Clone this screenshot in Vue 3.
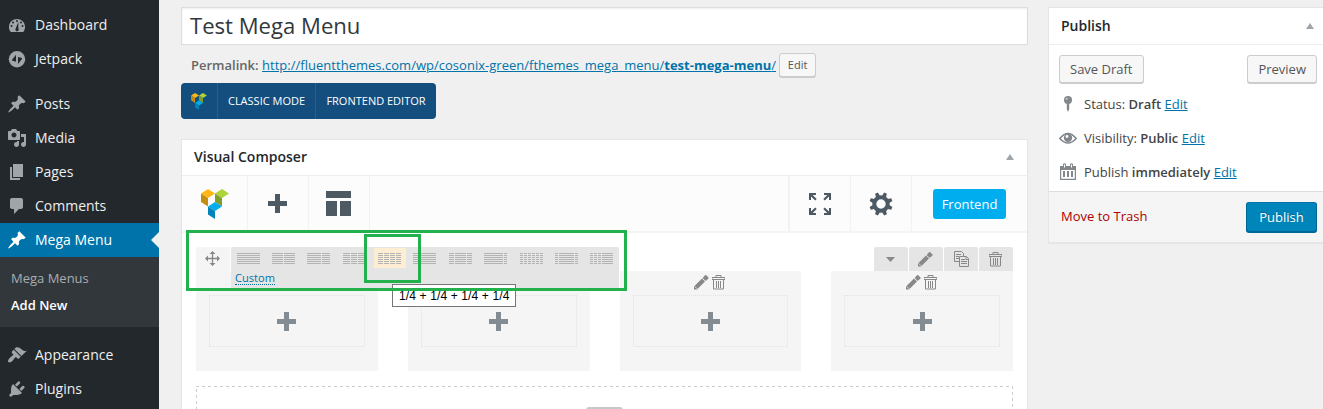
<script setup>
const icons = {
  dashboard: 'M3.76 17h12.48c1.34-1.59 2-3.72 1.76-5.82C17.54 7.08 14.25 4 10 4S2.46 7.08 2 11.18C1.76 13.28 2.42 15.41 3.76 17z',
  jetpack: 'M10 2a8.2 8.2 0 1 0 0 16.400a8.2 8.2 0 0 0 0-16.400z',
  pin: 'M10.44 3.02l1.82-1.82 6.36 6.35-1.83 1.82c-1.05-.68-2.48-.57-3.41.36l-.75.75c-.92.93-1.04 2.35-.35 3.41l-1.83 1.82-2.41-2.41-2.8 2.79c-.42.42-3.38 2.71-3.8 2.29s1.86-3.39 2.28-3.81l2.79-2.79L4.1 9.36l1.83-1.82c1.05.69 2.48.57 3.4-.36l.75-.75c.93-.92 1.05-2.35.36-3.41z',
  media: 'M13 11V4c0-.55-.45-1-1-1h-1.67L9 1H5L3.67 3H2c-.55 0-1 .45-1 1v7c0 .55.45 1 1 1h10c.55 0 1-.45 1-1zM7 4.500c1.380 0 2.500 1.120 2.500 2.500S8.380 9.500 7 9.500 4.500 8.380 4.500 7 5.620 4.500 7 4.500zM14 6h5v10.500c0 1.380-1.120 2.500-2.500 2.500S14 17.880 14 16.500s1.120-2.500 2.500-2.500c.17 0 .34.02.5.05V9h-3V6zm-4 8.050V13h2v3.500c0 1.380-1.120 2.500-2.500 2.500S7 17.880 7 16.500 8.120 14 9.500 14c.17 0 .34.02.5.05z',
  pages: 'M6 15V2h10v13H6zm-1 1h8v2H3V5h2v11z',
  comments: 'M5 2h9c1.100 0 2 .9 2 2v7c0 1.100-.9 2-2 2h-2l-5 5v-5H5c-1.100 0-2-.9-2-2V4c0-1.100.9-2 2-2z',
  brush: 'M14.480 11.060L7.410 3.990l1.500-1.500c.5-.56 2.300-.47 3.510.32 1.210.8 1.430 1.280 2.910 2.100 1.180.64 2.450 1.260 4.450.85zm-.71.71L6.700 4.700 4.930 6.470c-.39.39-.39 1.020 0 1.410l1.060 1.060c.39.39.39 1.030 0 1.420-.6.6-1.430 1.110-2.210 1.690-.35.26-.7.53-1.010.84C1.430 14.230.4 16.080 1.400 17.070c.99 1 2.840-.03 4.180-1.360.31-.31.58-.66.85-1.020.57-.78 1.080-1.610 1.690-2.210.39-.39 1.020-.39 1.410 0l1.060 1.060c.39.39 1.020.39 1.410 0z',
  plug: 'M13.110 4.360L9.870 7.600 8 5.730l3.240-3.240c.35-.34 1.050-.2 1.560.32.52.51.66 1.210.31 1.550zm-8 1.770l.91-1.120 9.010 9.010-1.190.84c-.71.71-2.630 1.160-3.820 1.160H6.140L4.900 17.260c-.59.59-1.540.59-2.120 0-.59-.58-.59-1.530 0-2.120l1.240-1.240v-3.880c0-1.130.4-3.190 1.090-3.890zm7.260 3.970l3.240-3.240c.34-.35 1.040-.21 1.550.31.52.51.66 1.210.31 1.550l-3.240 3.250z',
}
const menu = [
  { label: 'Dashboard', icon: 'dashboard' },
  { label: 'Jetpack', icon: 'jetpack' },
  { label: 'Posts', icon: 'pin', gap: true },
  { label: 'Media', icon: 'media' },
  { label: 'Pages', icon: 'pages' },
  { label: 'Comments', icon: 'comments' },
  { label: 'Mega Menu', icon: 'pin', current: true, sub: ['Mega Menus', 'Add New'] },
  { label: 'Appearance', icon: 'brush', gap: true },
  { label: 'Plugins', icon: 'plug' },
]
// Each layout is a list of [start, width] segments on a 23px wide glyph.
const layouts = [
  [[0, 23]],
  [[0, 11], [12, 11]],
  [[0, 14], [15, 8]],
  [[0, 7], [8, 6], [15, 8]],
  [[0, 5], [6, 5], [12, 5], [18, 5]],
  [[0, 5], [6, 17]],
  [[0, 5], [6, 11], [18, 5]],
  [[0, 19], [20, 3]],
  [[0, 3], [4, 3], [8, 3], [12, 3], [16, 3], [20, 3]],
  [[0, 3], [4, 15], [20, 3]],
  [[0, 3], [4, 3], [8, 3], [12, 11]],
]
const lines = [0, 2, 4, 6, 8, 10]
const teeth = [22.5, 67.5, 112.5, 157.5, 202.5, 247.5, 292.5, 337.5]
</script>

<template>
  <div class="screen">
    <svg class="defs" width="0" height="0">
      <symbol id="vc" viewBox="0 0 28 30">
        <path fill="#ffb718" d="M0 4.500L7 0l7 4.500L7 9z" />
        <path fill="#c58e12" d="M0 4.500L7 9v8.500L0 13z" />
        <path fill="#add43b" d="M14 4.500L21 0l7 4.500L21 9z" />
        <path fill="#7f9f2c" d="M14 4.500L21 9v8.500l-7-4.500z" />
        <path fill="#00aeef" d="M7 17.500L14 13l7 4.500L14 22z" />
        <path fill="#0084bb" d="M7 17.500L14 22v8l-7-4.500z" />
      </symbol>
      <symbol id="pencil" viewBox="0 0 15 15">
        <path d="M0 14.500V11.500L8 3.500l3 3-8 8z" />
        <path d="M8.600 2.900L11.300 0H12L14.500 2.500V3.500L11.600 5.900z" />
        <path d="M.8 11.500l2.400 2.400" stroke="#eee" stroke-width=".8" />
      </symbol>
      <symbol id="trash" viewBox="0 0 13 15">
        <path d="M4 2.500V.5h5v2M0 3.500V2.500h13v2H0zM1.500 4.500v9.500h10V4.500M4.500 6v7M6.500 6v7M8.500 6v7" fill="none" stroke="currentColor" />
      </symbol>
    </svg>

    <nav class="sidebar">
      <template v-for="m in menu" :key="m.label">
        <div class="item" :class="{ gap: m.gap, current: m.current }">
          <svg width="20" height="20" viewBox="0 0 20 20">
            <path :d="icons[m.icon]" fill="currentColor" fill-rule="evenodd" />
            <g v-if="m.icon === 'dashboard'" fill="#23282d">
              <circle cx="10" cy="6" r="1" /><circle cx="6" cy="7.500" r="1" />
              <circle cx="14" cy="7.500" r="1" /><circle cx="4.500" cy="11" r="1" />
              <circle cx="15.500" cy="11" r="1" />
              <path d="M11.300 7l.1 6.500a1.700 1.700 0 1 1-2.700 0z" />
            </g>
            <path v-if="m.icon === 'jetpack'" fill="#23282d" d="M9 5.800v6.900l-3.200-.9c-.8-.2-1-.7-.6-1.400zM11 8l3.200.8c.8.2 1 .8.6 1.500L11 15z" />
          </svg>
          <span>{{ m.label }}</span>
        </div>
        <div v-if="m.sub" class="submenu">
          <span v-for="(s, i) in m.sub" :key="s" :class="{ on: i === 1 }">{{ s }}</span>
        </div>
      </template>
    </nav>

    <main class="main">
      <div class="title">Test Mega Menu</div>
      <div class="permalink">
        <b>Permalink:</b>
        <a>http://fluentthemes.com/wp/cosonix-green/fthemes_mega_menu/<b>test-mega-menu</b>/</a>
        <span class="btn small">Edit</span>
      </div>
      <div class="switch">
        <span class="logo"><svg width="16" height="17"><use href="#vc" /></svg></span>
        <span class="classic">CLASSIC MODE</span>
        <span class="front">FRONTEND EDITOR</span>
      </div>

      <section class="box composer">
        <header><h2>Visual Composer</h2><i class="tri"></i></header>
        <div class="tools">
          <span class="tool first"><svg width="28" height="30"><use href="#vc" /></svg></span>
          <span class="tool"><svg width="19" height="19"><path d="M7 0h5v7h7v5h-7v7H7v-7H0V7h7z" /></svg></span>
          <span class="tool"><svg width="25" height="25"><path d="M0 0h25v7H0zM0 10h11v15H0zM14 10h11v15H14z" /></svg></span>
          <span class="tool full">
            <svg width="22" height="22" viewBox="0 0 22 22">
              <path d="M0 0h7v2H3.700l4 4-1.500 1.500L2 3.500V7H0zM22 0h-7v2h3.300l-4 4 1.500 1.500L20 3.500V7h2zM0 22h7v-2H3.700l4-4-1.500-1.500L2 18.500V15H0zM22 22h-7v-2h3.300l-4-4 1.500-1.500 4.200 4V15h2z" />
            </svg>
          </span>
          <span class="tool">
            <svg width="24" height="24" viewBox="-12 -12 24 24">
              <circle r="6.700" fill="none" stroke="#4d5963" stroke-width="4" />
              <path v-for="t in teeth" :key="t" d="M-2.100-8h4.200l-.6-3.700h-3z" :transform="`rotate(${t})`" />
            </svg>
          </span>
          <span class="frontend">Frontend</span>
        </div>

        <div class="content">
          <div class="rowbar">
            <span class="move">
              <svg width="15" height="15" viewBox="0 0 15 15">
                <path d="M7.500 1v13M1 7.500h13" stroke="#888" stroke-width="1.300" />
                <path d="M7.500 0l3 3h-6zM7.500 15l3-3h-6zM0 7.500l3-3v6zM15 7.500l-3-3v6z" fill="#888" />
              </svg>
            </span>
            <div class="layouts">
              <div class="glyphs">
                <span v-for="(l, i) in layouts" :key="i" :class="{ hot: i === 4 }">
                  <svg width="23" height="11" shape-rendering="crispEdges">
                    <template v-for="y in lines" :key="y">
                      <rect v-for="s in l" :key="s[0]" :x="s[0]" :y="y" :width="s[1]" height="1" fill="#b3b3b3" />
                    </template>
                  </svg>
                </span>
              </div>
              <a class="custom">Custom</a>
            </div>
            <div class="controls">
              <span><svg width="9" height="5"><path d="M0 0h9L4.500 5z" /></svg></span>
              <span><svg width="15" height="15"><use href="#pencil" /></svg></span>
              <span class="copy">
                <svg width="15" height="16" viewBox="0 0 15 16" fill="none" stroke="#888">
                  <path d="M5 10.500H.5V.5h7l2 2V5M2 3.500h5M2 5.500h3M2 7.500h3" />
                  <path d="M5.500 5.500h7l2 2v8h-9zM7 8.500h4M7 10.500h6M7 12.500h6M12 6v2.500h2" />
                </svg>
              </span>
              <span><svg width="13" height="15"><use href="#trash" /></svg></span>
            </div>
          </div>
          <div class="cols">
            <div v-for="c in 4" :key="c" class="col">
              <div class="colicons">
                <svg width="15" height="15"><use href="#pencil" /></svg>
                <svg width="13" height="15"><use href="#trash" /></svg>
              </div>
              <div class="drop"><svg width="19" height="19"><path d="M7 0h5v7h7v5h-7v7H7v-7H0V7h7z" /></svg></div>
            </div>
          </div>
          <div class="dashed">
            <svg width="817" height="24" fill="none" stroke="#ccc" stroke-dasharray="3 3">
              <path d="M0 .5H817M.5 3V24M816.500 0V24" />
            </svg>
            <i class="add"></i>
          </div>
        </div>
      </section>
    </main>

    <aside class="box publish">
      <header><h2>Publish</h2><i class="tri"></i></header>
      <div class="actions"><span class="btn">Save Draft</span><span class="btn">Preview</span></div>
      <div class="meta">
        <svg width="18" height="18" viewBox="0 0 18 18"><circle cx="9" cy="5" r="4" /><path d="M7.800 8h2.400v6L9 17l-1.200-3z" /><circle cx="7.700" cy="3.800" r="1.100" fill="#c3c7ca" /></svg>
        <span>Status: <b>Draft</b> <a>Edit</a></span>
      </div>
      <div class="meta">
        <svg width="18" height="18" viewBox="0 0 18 18"><path d="M.8 9.500Q9-.5 17.200 9.500 9 18.500.8 9.500z" fill="none" stroke="#82878c" stroke-width="1.500" /><circle cx="9" cy="8.900" r="4.200" /><circle cx="8" cy="7.500" r="1.400" fill="#fff" /></svg>
        <span>Visibility: <b>Public</b> <a>Edit</a></span>
      </div>
      <div class="meta">
        <svg width="18" height="18" viewBox="0 0 18 18"><path fill-rule="evenodd" d="M1 3h3V1q1.500-1.500 3 0v2h4V1q1.500-1.500 3 0v2h3v14H1zm1.200 4v8.800h13.600V7zM4 8h2v6H4zm4 0h2v6H8zm4 0h2v6h-2zM5 1.500v3h1v-3zm7 0v3h1v-3z" /></svg>
        <span>Publish <b>immediately</b> <a>Edit</a></span>
      </div>
      <footer><a class="trashlink">Move to Trash</a><span class="primary">Publish</span></footer>
    </aside>

    <div class="tip">1/4 + 1/4 + 1/4 + 1/4</div>
    <div class="mark wide"></div>
    <div class="mark narrow"></div>
  </div>
</template>

<style>
body { background: #f0f0f0; }
</style>
<style scoped>
.screen { position: relative; display: flex; width: 1323px; height: 409px; overflow: hidden; background: #f0f0f0; color: #444; font: 13px/18px "Open Sans", sans-serif; box-sizing: border-box; }
.screen * { box-sizing: border-box; }
.defs { position: absolute; }
svg { display: block; flex: none; }
a { color: #0073aa; text-decoration: underline; }
b { font-weight: 600; }
.sidebar { width: 159px; flex: none; padding-top: 8px; background: #23282d; color: #eee; font-size: 14px; }
.item { display: flex; align-items: center; gap: 8px; height: 34px; padding-left: 7px; }
.item svg { color: #a0a5aa; }
.item.gap { margin-top: 11px; }
.item.current { position: relative; background: #0073aa; color: #fff; }
.item.current svg { color: #fff; }
.item.current::after { content: ""; position: absolute; right: 0; top: 9px; border: 8px solid transparent; border-left: 0; border-right-color: #f0f0f0; }
.submenu { height: 70px; padding: 8px 11px; background: #32373c; display: flex; flex-direction: column; font-size: 13px; line-height: 27px; color: #a9adb1; }
.submenu .on { color: #fff; font-weight: 600; }
.main { width: 847px; flex: none; margin-left: 22px; padding-top: 7px; }
.title { height: 38px; padding: 0 8px; border: 1px solid #ddd; background: #fff; box-shadow: inset 0 1px 2px rgba(0,0,0,.07); color: #32373c; font-size: 22.100px; line-height: 35px; }
.permalink { display: flex; align-items: center; height: 24px; margin-top: 8px; padding-left: 10px; white-space: nowrap; }
.permalink > b { color: #666; margin-right: 3.500px; }
.permalink a { letter-spacing: .02px; }
.permalink a b { font-weight: 700; letter-spacing: 0; }
.btn { display: inline-flex; align-items: center; height: 28px; padding: 0 10px; border: 1px solid #ccc; border-radius: 3px; background: #f7f7f7; box-shadow: 0 1px 0 #ccc; color: #555; }
.btn.small { width: 37px; justify-content: center; height: 24px; margin-left: 3px; padding: 0; font-size: 11px; }
.switch { display: flex; width: 255px; height: 36px; margin-top: 6px; border-radius: 4px; background: #134e7f; color: #fff; font-size: 11px; }
.switch span { display: flex; align-items: center; justify-content: center; }
.logo { width: 36px; }
.classic { width: 98px; border-left: 1px solid #255f8f; }
.front { width: 121px; border-left: 1px solid #255f8f; }
.box { border: 1px solid #e5e5e5; background: #fff; box-shadow: 0 1px 1px rgba(0,0,0,.04); }
.box header { display: flex; align-items: center; justify-content: space-between; height: 37px; padding: 0 13px 0 12px; border-bottom: 1px solid #eee; }
h2 { margin: 0; color: #23282d; font-size: 14px; line-height: 20px; font-weight: 600; }
.tri { border: 4px solid transparent; border-top: 0; border-bottom: 6px solid #a0a5aa; }
.composer { height: 290px; margin-top: 20px; }
.composer header { height: 36px; padding-bottom: 2px; }
.tools { display: flex; height: 57px; border-bottom: 2px solid #f4f4f4; background: #fcfcfc; fill: #4d5963; }
.tool { display: flex; align-items: center; justify-content: center; width: 61px; padding-right: 1px; border-right: 1px solid #f2f2f2; }
.tool.first { width: 66px; padding-right: 0; }
.tool.full { width: 63px; margin-left: auto; padding-right: 0; border-left: 2px solid #f2f2f2; }
.frontend { display: flex; align-items: center; justify-content: center; width: 73px; height: 30px; margin: 13px 21px 0; border-radius: 3px; background: #00aef0; color: #fff; }
.content { padding: 14px 14px 0; }
.rowbar { position: relative; display: flex; height: 24px; }
.move { display: flex; align-items: center; justify-content: center; width: 34px; height: 24px; padding: 0 1px 1px 0; background: #f5f5f5; border-radius: 3px 0 0; }
.layouts { position: absolute; left: 35px; top: 0; width: 388px; height: 44px; background: #e5e5e5; border-radius: 2px; }
.glyphs { display: flex; height: 20px; margin-top: 1px; padding-left: 6px; }
.glyphs span { flex: none; padding-top: 5px; margin-right: 12px; }
.glyphs span:nth-child(3), .glyphs span:nth-child(6), .glyphs span:nth-child(8) { margin-right: 13px; }
.glyphs .hot { margin: 0 7px 0 -4px; padding: 5px 5px 0 4px; background: #fdedd3; }
.custom { position: absolute; left: 4px; top: 23px; height: 15px; border-bottom: 1px dotted #0073aa; font-size: 11.100px; line-height: 16px; text-decoration: none; }
.controls { display: flex; gap: 1px; margin-left: auto; color: #888; fill: #888; }
.controls span { display: flex; align-items: center; justify-content: center; width: 34px; padding-right: 1px; background: #e5e5e5; border-radius: 2px 2px 0 0; }
.controls .copy { padding: 0 0 1px 1px; }
.cols { display: grid; grid-template-columns: repeat(4, 1fr); gap: 30px; }
.col { height: 100px; padding: 4px 13px 0; background: #f5f5f5; color: #888; fill: #888; }
.colicons { display: flex; justify-content: center; gap: 3px; height: 20px; margin-right: 2px; }
.drop { display: flex; align-items: center; justify-content: center; height: 52px; border: 1px dotted #e2e2e2; fill: #848c93; }
.dashed { height: 24px; margin-top: 15px; display: flex; flex-direction: column; align-items: center; }
.add { width: 37px; height: 3px; margin-top: -3px; border-radius: 3px 3px 0 0; background: #c8c8c8; }
.publish { width: 280px; height: 236px; flex: none; margin: 7px 0 0 20px; }
.actions { display: flex; justify-content: space-between; height: 42px; padding: 10px 10px 0; }
.meta { display: flex; align-items: center; gap: 7px; height: 34px; padding-left: 10px; fill: #82878c; }
.publish footer { display: flex; align-items: center; justify-content: space-between; height: 51px; margin-top: 2px; padding: 0 10px 0 12px; border-top: 1px solid #ddd; background: #f5f5f5; }
.publish .trashlink { margin-top: -3px; color: #a00; text-decoration: none; }
.primary { display: flex; align-items: center; justify-content: center; width: 71px; height: 30px; padding-bottom: 1px; border: 1px solid #006799; border-top-color: #0073aa; border-radius: 3px; background: #0085ba; box-shadow: 0 1px 0 #006799; color: #fff; text-shadow: 0 -1px 1px #006799; }
.tip { position: absolute; left: 392px; top: 284px; width: 124px; height: 23px; padding-left: 6px; border: 1px solid #767676; background: #fff; color: #000; font: 12px/23px "Liberation Sans", Arial, sans-serif; letter-spacing: .13px; white-space: nowrap; }
.mark { position: absolute; border: 3px solid #22b14c; }
.wide { left: 186px; top: 230px; width: 441px; height: 61px; }
.narrow { left: 364px; top: 234px; width: 57px; height: 49px; }
</style>
